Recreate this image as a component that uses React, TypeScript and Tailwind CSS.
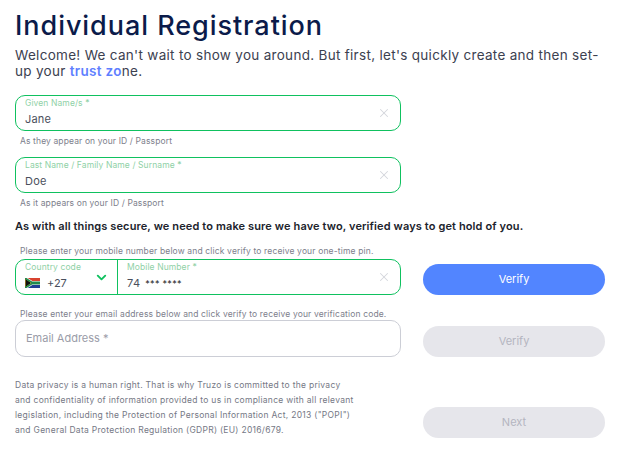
import { ChevronDown, X } from 'lucide-react';

const font = { fontFamily: 'Inter, "Liberation Sans", sans-serif' };

function Flag() {
  return (
    <svg width="15" height="10" viewBox="0 0 15 10" className="shrink-0">
      <rect width="15" height="5" fill="#d8432f" />
      <rect y="5" width="15" height="5" fill="#1f3f94" />
      <path d="M0 0L6.5 5L0 10Z" fill="#111" stroke="#f2c230" strokeWidth="1" />
      <path d="M0 -1L7 3.6H15V6.4H7L0 11" fill="none" stroke="#fff" strokeWidth="1.2" />
      <path d="M0 0L7 4.4H15V5.6H7L0 10" fill="none" stroke="#1f8a4c" strokeWidth="1.6" />
    </svg>
  );
}

function Field({ label, value }: { label: string; value: string }) {
  return (
    <div className="h-[36px] w-[386px] rounded-[10px] border border-[#0fc15f] pl-[9px] pr-[9px] flex items-center justify-between">
      <div className="flex flex-col pb-[2px]">
        <span className="text-[8.5px] leading-[10px] tracking-[0.1px] text-[#8fd1a6]">{label}</span>
        <span className="text-[11px] leading-[14px] mt-[4px] tracking-[0.2px] text-[#4a4f5c]">{value}</span>
      </div>
      <X size={14} strokeWidth={1.75} className="text-[#d4d6dc]" />
    </div>
  );
}

function Hint({ children }: { children: string }) {
  return <p className="text-[8.5px] leading-[12px] tracking-[0.12px] text-[#7d808c] pl-[5px] mt-[4px]">{children}</p>;
}

function Note({ children }: { children: string }) {
  return <p className="text-[8.5px] leading-[12px] tracking-[0.15px] text-[#7d808c] pl-[5px]">{children}</p>;
}

function Button({ label, active }: { label: string; active?: boolean }) {
  return (
    <button className={active
      ? 'w-[182px] h-[31px] rounded-full bg-[#5285ff] text-white text-[11px]'
      : 'w-[182px] h-[31px] rounded-full bg-[#e6e6eb] text-[#b4b5c0] text-[11px]'}>
      {label}
    </button>
  );
}

export default function App() {
  return (
    <div style={font} className="w-[634px] h-[456px] bg-white px-[15px] pt-[10px] overflow-hidden">
      <h1 className="text-[27px] leading-[32px] font-medium text-[#0b1b4a] tracking-[0.95px]">Individual Registration</h1>
      <p className="mt-[5px] text-[13.5px] leading-[16px] tracking-[0.3px] text-[#3c4150] w-[592px]">
        Welcome! We can't wait to show you around. But first, let's quickly create and then set-<br />
        up your <span className="text-[#5f7fff] font-semibold">trust zo</span>ne.
      </p>

      <div className="mt-[16px]">
        <Field label="Given Name/s *" value="Jane" />
        <Hint>As they appear on your ID / Passport</Hint>
      </div>
      <div className="mt-[10px]">
        <Field label="Last Name / Family Name / Surname *" value="Doe" />
        <Hint>As it appears on your ID / Passport</Hint>
      </div>

      <p className="mt-[10px] text-[11px] leading-[14px] tracking-[0.12px] font-semibold text-[#20232c]">
        As with all things secure, we need to make sure we have two, verified ways to get hold of you.
      </p>

      <div className="mt-[12px] flex items-end gap-[22px]">
        <div className="w-[386px]">
          <Note>Please enter your mobile number below and click verify to receive your one-time pin.</Note>
          <div className="mt-[2px] h-[36px] rounded-[10px] border border-[#0fc15f] flex">
            <div className="w-[102px] border-r border-[#0fc15f] pl-[9px] pr-[8px] flex items-center justify-between">
              <div className="flex flex-col pb-[2px]">
                <span className="text-[8.5px] leading-[10px] tracking-[0.1px] text-[#8fd1a6]">Country code</span>
                <span className="mt-[4px] flex items-center gap-[7px] text-[11px] leading-[14px] text-[#4a4f5c]"><Flag />+27</span>
              </div>
              <ChevronDown size={15} strokeWidth={3} className="text-[#0fc15f]" />
            </div>
            <div className="flex-1 pl-[9px] pr-[9px] flex items-center justify-between">
              <div className="flex flex-col pb-[2px]">
                <span className="text-[8.5px] leading-[10px] tracking-[0.1px] text-[#8fd1a6]">Mobile Number *</span>
                <span className="mt-[4px] text-[11px] leading-[14px] tracking-[0.3px] text-[#4a4f5c]">74<span className="ml-[5px] text-[9px] text-[#222]">*** ****</span></span>
              </div>
              <X size={14} strokeWidth={1.75} className="text-[#d4d6dc]" />
            </div>
          </div>
        </div>
        <Button label="Verify" active />
      </div>

      <div className="mt-[13px] flex items-end gap-[22px]">
        <div className="w-[386px]">
          <Note>Please enter your email address below and click verify to receive your verification code.</Note>
          <div className="h-[37px] rounded-[10px] border border-[#ccced6] pl-[10px] flex items-center text-[11px] text-[#9a9ca8]">
            Email Address *
          </div>
        </div>
        <Button label="Verify" />
      </div>

      <div className="mt-[21px] flex items-end justify-between w-[590px]">
        <p className="text-[8.5px] leading-[15px] tracking-[0.28px] text-[#757885]">
          Data privacy is a human right. That is why Truzo is committed to the privacy<br />
          and confidentiality of information provided to us in compliance with all relevant<br />
          legislation, including the Protection of Personal Information Act, 2013 ("POPI")<br />
          and General Data Protection Regulation (GDPR) (EU) 2016/679.
        </p>
        <Button label="Next" />
      </div>
    </div>
  );
}
